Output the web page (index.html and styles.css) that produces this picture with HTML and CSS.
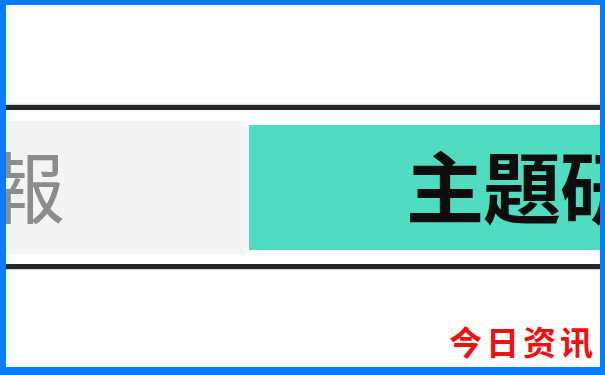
FILE: index.html
```
<!DOCTYPE html>
<html lang="zh-Hant">
<head>
<meta charset="utf-8">
<title>主題研究</title>
<link rel="stylesheet" href="styles.css">
</head>
<body>
<div class="frame">
  <div class="band">
    <div class="tab tab-muted"><span class="tab-label">報</span></div>
    <div class="tab tab-active"><span class="tab-label">主題研究</span></div>
  </div>
  <div class="watermark">今日资讯</div>
</div>
</body>
</html>
```

FILE: styles.css
```
html, body {
  margin: 0;
  padding: 0;
  width: 605px;
  height: 375px;
  overflow: hidden;
  background: #fdfdfd;
}

.frame {
  position: relative;
  box-sizing: border-box;
  width: 605px;
  height: 375px;
  border-style: solid;
  border-color: #0b7cf7;
  border-width: 5px 5px 8px 6px;
  padding-top: 100px;
  overflow: hidden;
  background: #fdfdfd;
  font-family: "Noto Sans CJK TC", "Noto Sans CJK SC", sans-serif;
}

.band {
  display: flex;
  align-items: center;
  gap: 3px;
  height: 154px;
  border-top: 5px solid #262626;
  border-bottom: 5px solid #262626;
  box-shadow: 0 -1px 1px rgba(0,0,0,0.15), 0 1px 1px rgba(0,0,0,0.15);
}

.tab {
  display: flex;
  align-items: center;
  flex-shrink: 0;
  overflow: hidden;
  white-space: nowrap;
}

.tab-muted {
  width: 240px;
  height: 133px;
  background: #f4f4f4;
}

.tab-muted .tab-label {
  margin-left: -19px;
  margin-top: -7px;
  font-size: 78px;
  font-weight: 400;
  color: #8c8c8c;
  line-height: 1;
}

.tab-active {
  width: 400px;
  height: 125px;
  background: #50ddbf;
  padding-left: 157px;
  box-sizing: border-box;
}

.tab-active .tab-label {
  margin-top: -7px;
  font-size: 78px;
  font-weight: 700;
  color: #0d0d0d;
  line-height: 1;
  letter-spacing: -1px;
}

.watermark {
  position: absolute;
  right: 3px;
  bottom: 9px;
  font-family: "Noto Sans CJK SC", sans-serif;
  font-size: 33px;
  font-weight: 700;
  color: #f01010;
  letter-spacing: 4px;
  line-height: 1;
}
```
